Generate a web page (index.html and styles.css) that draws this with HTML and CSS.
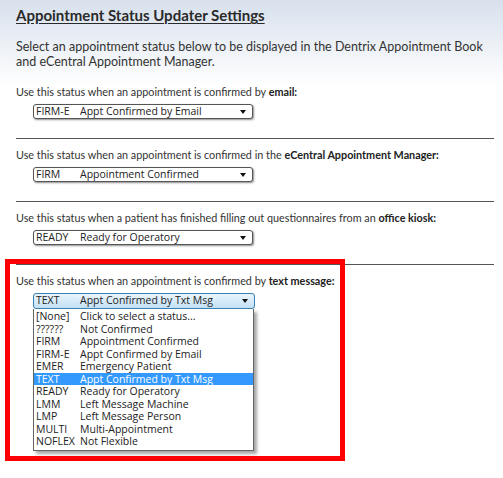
FILE: index.html
```html
<!DOCTYPE html>
<html lang="en">
<head>
    <meta charset="UTF-8">
    <meta name="viewport" content="width=device-width, initial-scale=1.0">
    <title>Appointment Status Updater Settings</title>
    <link rel="stylesheet" href="styles.css">
</head>
<body>
    <div class="page">
        <div class="title">Appointment Status Updater Settings</div>
        <div class="intro">Select an appointment status below to be displayed in the Dentrix Appointment Book and eCentral Appointment Manager.</div>

        <!-- Email -->
        <div class="section">
            <div class="label">Use this status when an appointment is confirmed by <b>email:</b></div>
            <div class="dropdown">
                <span class="code">FIRM-E</span><span class="desc">Appt Confirmed by Email</span>
                <span class="arrow"></span>
            </div>
        </div>

        <!-- eCentral -->
        <div class="section">
            <div class="label">Use this status when an appointment is confirmed in the <b>eCentral Appointment Manager:</b></div>
            <div class="dropdown">
                <span class="code">FIRM</span><span class="desc">Appointment Confirmed</span>
                <span class="arrow"></span>
            </div>
        </div>

        <!-- Kiosk -->
        <div class="section">
            <div class="label">Use this status when a patient has finished filling out questionnaires from an <b>office kiosk:</b></div>
            <div class="dropdown">
                <span class="code">READY</span><span class="desc">Ready for Operatory</span>
                <span class="arrow"></span>
            </div>
        </div>

        <!-- Text message (open) -->
        <div class="section last">
            <div class="label">Use this status when an appointment is confirmed by <b>text message:</b></div>
            <div class="dropdown open">
                <span class="code">TEXT</span><span class="desc">Appt Confirmed by Txt Msg</span>
                <span class="arrow"></span>
            </div>
            <div class="list">
                <div class="item"><span class="code">[None]</span><span class="desc">Click to select a status...</span></div>
                <div class="item"><span class="code">??????</span><span class="desc">Not Confirmed</span></div>
                <div class="item"><span class="code">FIRM</span><span class="desc">Appointment Confirmed</span></div>
                <div class="item"><span class="code">FIRM-E</span><span class="desc">Appt Confirmed by Email</span></div>
                <div class="item"><span class="code">EMER</span><span class="desc">Emergency Patient</span></div>
                <div class="item selected"><span class="code">TEXT</span><span class="desc">Appt Confirmed by Txt Msg</span></div>
                <div class="item"><span class="code">READY</span><span class="desc">Ready for Operatory</span></div>
                <div class="item"><span class="code">LMM</span><span class="desc">Left Message Machine</span></div>
                <div class="item"><span class="code">LMP</span><span class="desc">Left Message Person</span></div>
                <div class="item"><span class="code">MULTI</span><span class="desc">Multi-Appointment</span></div>
                <div class="item"><span class="code">NOFLEX</span><span class="desc">Not Flexible</span></div>
            </div>
        </div>

        <!-- Annotation box -->
        <div class="highlight-box"></div>
    </div>
</body>
</html>
```

FILE: styles.css
```css
body {
    margin: 0;
    font-family: Lato, "Open Sans", sans-serif;
    color: #333;
    background: linear-gradient(#d7e0ec, #ffffff 85px) no-repeat;
    background-color: #fff;
}
.page {
    position: relative;
    padding: 7px 9px 0 16px;
    height: 471px;
}
.title {
    font-size: 15px;
    font-weight: bold;
    color: #2a2a2a;
    text-decoration: underline;
    text-underline-offset: 2px;
    line-height: 17px;
}
.intro {
    margin-top: 15px;
    font-size: 12.5px;
    line-height: 15px;
    padding-right: 10px;
}
.section {
    padding: 9px 0 19px 0;
    border-bottom: 1px solid #555;
}
.intro + .section {
    margin-top: 16px;
    padding-top: 0;
}
.section.last {
    border-bottom: none;
    padding-bottom: 0;
}
.label {
    font-size: 10.8px;
    line-height: 14px;
    color: #333;
}
.label b {
    color: #222;
}
.dropdown {
    position: relative;
    margin: 5px 0 0 17px;
    width: 220px;
    height: 15px;
    box-sizing: border-box;
    border: 1px solid #555;
    border-radius: 3px;
    background: #fff;
    box-shadow: 1px 1px 2px rgba(0, 0, 0, 0.45);
    padding-left: 2px;
    font-family: "Open Sans", sans-serif;
    font-size: 10.5px;
    line-height: 13px;
    color: #222;
    display: flex;
}
.dropdown.open {
    height: 16px;
    border-color: #3c7fb1;
    background: linear-gradient(#eaf5fd, #c2e0f5);
    box-shadow: none;
    width: 222px;
}
.code {
    display: inline-block;
    width: 44px;
    flex-shrink: 0;
}
.arrow {
    position: absolute;
    right: 6px;
    top: 5px;
    width: 0;
    height: 0;
    border-left: 3px solid transparent;
    border-right: 3px solid transparent;
    border-top: 4px solid #111;
}
.list {
    margin-left: 17px;
    width: 221px;
    box-sizing: border-box;
    border: 1px solid #646464;
    border-top: none;
    background: #fff;
    box-shadow: 3px 3px 3px rgba(0, 0, 0, 0.35);
    font-family: "Open Sans", sans-serif;
    font-size: 10.5px;
    color: #222;
    padding: 1px 0 2px 0;
}
.item {
    display: flex;
    height: 12.5px;
    line-height: 12.5px;
    padding-left: 2px;
}
.item.selected {
    background: #3399ff;
    color: #fff;
}
/* Red annotation frame around the text message setting */
.highlight-box {
    position: absolute;
    left: 5px;
    top: 259px;
    width: 340px;
    height: 202px;
    box-sizing: border-box;
    border: 5px solid #ff0000;
}
```
